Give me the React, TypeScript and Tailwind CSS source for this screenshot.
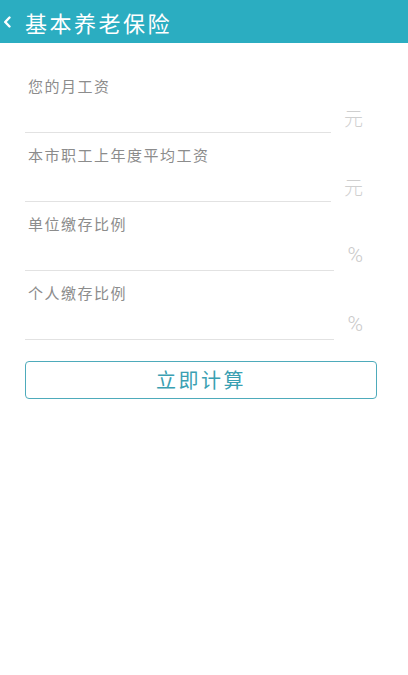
import React from "react";

const fields = [
  { label: "您的月工资", unit: "元" },
  { label: "本市职工上年度平均工资", unit: "元" },
  { label: "单位缴存比例", unit: "%" },
  { label: "个人缴存比例", unit: "%" },
];

const cjk = "font-['Noto_Sans_CJK_SC','Noto_Sans',sans-serif]";

const App: React.FC = () => {
  return (
    <div className={`min-h-[675px] w-full bg-white ${cjk}`}>
      <header className="flex h-[43px] items-center bg-[#2badc1] text-white">
        <svg width="8" height="12" viewBox="0 0 8 12" className="ml-[3px]">
          <path d="M6.5 1.5 L2.2 6 L6.5 10.5" fill="none" stroke="#fff" strokeWidth="2.4" strokeLinecap="round" strokeLinejoin="round" />
        </svg>
        <h1 className="ml-[14px] text-[22px] leading-none tracking-[2.5px]">基本养老保险</h1>
      </header>

      <div className="pl-[25px] pr-[45px] pt-[21px]">
        {fields.map((f) => (
          <div key={f.label} className="flex pt-[14px]">
            <div className="flex-1 border-b border-[#e2e2e2]">
              <div className="h-[16px] pl-[3px] text-[15px] leading-[16px] tracking-[1.5px] text-[#8c8c8c]">{f.label}</div>
              <input className="block h-[38px] w-full bg-transparent text-[16px] outline-none" />
            </div>
            <span
              className={
                f.unit === "%"
                  ? "mb-[5px] ml-[13px] self-end font-['Roboto',sans-serif] text-[21px] font-light leading-[21px] text-[#c9c9c9]"
                  : "mb-[6px] ml-[13px] self-end text-[19px] font-light leading-[19px] text-[#cfcfcf]"
              }
            >
              {f.unit}
            </span>
          </div>
        ))}
      </div>

      <div className="pl-[25px] pr-[31px] pt-[21px]">
        <button className="flex h-[38px] w-full items-center justify-center rounded-[4px] border border-[#4eabbb] text-[20px] tracking-[2.5px] text-[#3aa0b2]">
          立即计算
        </button>
      </div>
    </div>
  );
};

export default App;
